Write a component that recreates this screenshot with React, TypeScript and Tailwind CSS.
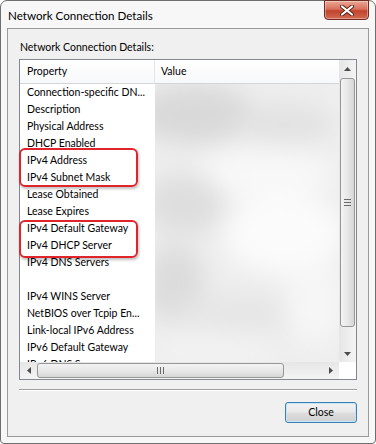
const rows = [
  "Connection-specific DN...",
  "Description",
  "Physical Address",
  "DHCP Enabled",
  "IPv4 Address",
  "IPv4 Subnet Mask",
  "Lease Obtained",
  "Lease Expires",
  "IPv4 Default Gateway",
  "IPv4 DHCP Server",
  "IPv4 DNS Servers",
  "",
  "IPv4 WINS Server",
  "NetBIOS over Tcpip En...",
  "Link-local IPv6 Address",
  "IPv6 Default Gateway",
  "IPv6 DNS Servers",
];

const font = { fontFamily: 'Lato, "Noto Sans", sans-serif' };

const CloseX = () => (
  <svg width="14" height="11" viewBox="0 0 14 11">
    <path d="M2 1.5 L12 9.5 M12 1.5 L2 9.5" stroke="#5a2318" strokeWidth="4" strokeLinecap="round" />
    <path d="M2 1.5 L12 9.5 M12 1.5 L2 9.5" stroke="#ffffff" strokeWidth="2.2" strokeLinecap="round" />
  </svg>
);

const Arrow = ({ dir }: { dir: "up" | "down" | "left" | "right" }) => {
  const d = {
    up: "M0 4 L3.5 0 L7 4 Z",
    down: "M0 0 L7 0 L3.5 4 Z",
    left: "M4 0 L4 7 L0 3.5 Z",
    right: "M0 0 L4 3.5 L0 7 Z",
  }[dir];
  const w = dir === "up" || dir === "down" ? 7 : 4;
  const h = dir === "up" || dir === "down" ? 4 : 7;
  return (
    <svg width={w} height={h} viewBox={`0 0 ${w} ${h}`}>
      <path d={d} fill="#4d4d4d" />
    </svg>
  );
};

const BlurredValues = () => (
  <svg width="100%" height="100%" viewBox="0 0 185 278" preserveAspectRatio="none">
    <defs>
      <filter id="b" x="-50%" y="-50%" width="200%" height="200%">
        <feGaussianBlur stdDeviation="12" />
      </filter>
    </defs>
    <rect width="185" height="278" fill="#eeeeee" />
    <g filter="url(#b)">
      <ellipse cx="40" cy="30" rx="60" ry="30" fill="#d9d9d9" />
      <ellipse cx="130" cy="40" rx="50" ry="20" fill="#e2e2e2" />
      <ellipse cx="110" cy="90" rx="70" ry="25" fill="#f8f8f8" />
      <ellipse cx="30" cy="120" rx="40" ry="30" fill="#dedede" />
      <ellipse cx="130" cy="150" rx="60" ry="40" fill="#fbfbfb" />
      <ellipse cx="20" cy="200" rx="30" ry="40" fill="#dcdcdc" />
      <ellipse cx="90" cy="230" rx="70" ry="20" fill="#e6e6e6" />
      <ellipse cx="160" cy="220" rx="30" ry="40" fill="#f6f6f6" />
      <ellipse cx="60" cy="265" rx="60" ry="15" fill="#f3f3f3" />
    </g>
  </svg>
);

export default function App() {
  return (
    <div className="relative w-[376px] h-[444px] bg-white overflow-hidden text-[10.5px] text-black" style={font}>
      <div className="flex flex-col w-full h-full border border-[#6f6f6f] rounded-t-[7px] rounded-b-[4px] bg-[#f7f7f7]">
        {/* title bar */}
        <div className="flex h-[27px] shrink-0">
          <div className="pl-[7px] pt-[7px] text-[11.6px] leading-[16px] text-black">Network Connection Details</div>
          <div className="ml-auto mr-[6px] mt-[-1px] w-[45px] h-[20px] rounded-b-[4px] border border-[#6e2c22] bg-[linear-gradient(#e9a997,#d9705a_45%,#c0432c_55%,#d26a52)] flex items-center justify-center shadow-[inset_0_0_0_1px_rgba(255,255,255,0.35)]">
            <CloseX />
          </div>
        </div>

        {/* client area */}
        <div className="flex flex-col flex-1 mx-[6px] mb-[6px] border border-[#9a9a9a] bg-[#f0f0f0] px-[11px] pt-[10px]">
          <div className="h-[16px] leading-[16px] pl-[1px]">Network Connection Details:</div>

          {/* list view */}
          <div className="mt-[4px] flex flex-col h-[321px] border border-[#828790] bg-white">
            <div className="flex flex-1 min-h-0">
              <div className="flex flex-1 overflow-hidden">
                <div className="flex flex-col w-[135px] shrink-0 overflow-hidden">
                  <div className="h-[24px] shrink-0 border-b border-[#d5d5d5] border-r border-r-[#e5e5e5] bg-[linear-gradient(#ffffff,#f7f8fa)] pl-[7px] leading-[23px]">
                    Property
                  </div>
                  {rows.map((r, i) => (
                    <div key={i} className="h-[17px] shrink-0 leading-[17px] pl-[7px] whitespace-nowrap">
                      {r}
                    </div>
                  ))}
                </div>
                <div className="flex flex-col flex-1">
                  <div className="h-[24px] shrink-0 border-b border-[#d5d5d5] bg-[linear-gradient(#ffffff,#f7f8fa)] pl-[6px] leading-[23px]">
                    Value
                  </div>
                  <div className="flex-1 min-h-0">
                    <BlurredValues />
                  </div>
                </div>
              </div>
              {/* vertical scrollbar */}
              <div className="flex flex-col w-[17px] shrink-0 bg-[linear-gradient(90deg,#e6e6e6,#f4f4f4)]">
                <div className="h-[17px] flex items-center justify-center">
                  <Arrow dir="up" />
                </div>
                <div className="mx-[1px] mt-[1px] h-[249px] rounded-[3px] border border-[#979797] bg-[linear-gradient(90deg,#f3f3f3,#e8e8e8_50%,#d6d6d6)] flex items-center justify-center">
                  <div className="flex flex-col gap-[2px]">
                    <div className="w-[7px] h-[1px] bg-[#6a6a6a]" />
                    <div className="w-[7px] h-[1px] bg-[#6a6a6a]" />
                    <div className="w-[7px] h-[1px] bg-[#6a6a6a]" />
                  </div>
                </div>
                <div className="mt-auto h-[17px] flex items-center justify-center">
                  <Arrow dir="down" />
                </div>
              </div>
            </div>
            {/* horizontal scrollbar */}
            <div className="flex h-[17px] shrink-0">
              <div className="flex flex-1 items-center bg-[linear-gradient(#e6e6e6,#f4f4f4)]">
                <div className="w-[17px] h-[17px] flex items-center justify-center">
                  <Arrow dir="left" />
                </div>
                <div className="w-[247px] h-[15px] rounded-[3px] border border-[#979797] bg-[linear-gradient(#f3f3f3,#e8e8e8_50%,#d6d6d6)] flex items-center justify-center">
                  <div className="flex gap-[2px]">
                    <div className="w-[1px] h-[7px] bg-[#6a6a6a]" />
                    <div className="w-[1px] h-[7px] bg-[#6a6a6a]" />
                    <div className="w-[1px] h-[7px] bg-[#6a6a6a]" />
                  </div>
                </div>
                <div className="ml-auto w-[17px] h-[17px] flex items-center justify-center">
                  <Arrow dir="right" />
                </div>
              </div>
              <div className="w-[17px] bg-white" />
            </div>
          </div>

          {/* separator */}
          <div className="mt-[9px] border-t border-[#a0a0a0] border-b border-b-white" />

          <div className="flex justify-end mt-[11px]">
            <button className="w-[72px] h-[21px] rounded-[3px] border border-[#3c7fb1] bg-[linear-gradient(#f2f2f2,#ebebeb_45%,#dddddd_55%,#cfcfcf)] shadow-[inset_0_0_0_1px_#c6e5f7] text-[10.5px] leading-[19px] text-black" style={font}>
              Close
            </button>
          </div>
        </div>
      </div>

      {/* annotation highlights */}
      <div className="absolute left-[19px] top-[148px] w-[119px] h-[39px] rounded-[6px] border-2 border-[#e0242b] shadow-[1px_2px_3px_rgba(0,0,0,0.25)]" />
      <div className="absolute left-[19px] top-[220px] w-[119px] h-[38px] rounded-[6px] border-2 border-[#e0242b] shadow-[1px_2px_3px_rgba(0,0,0,0.25)]" />
    </div>
  );
}
